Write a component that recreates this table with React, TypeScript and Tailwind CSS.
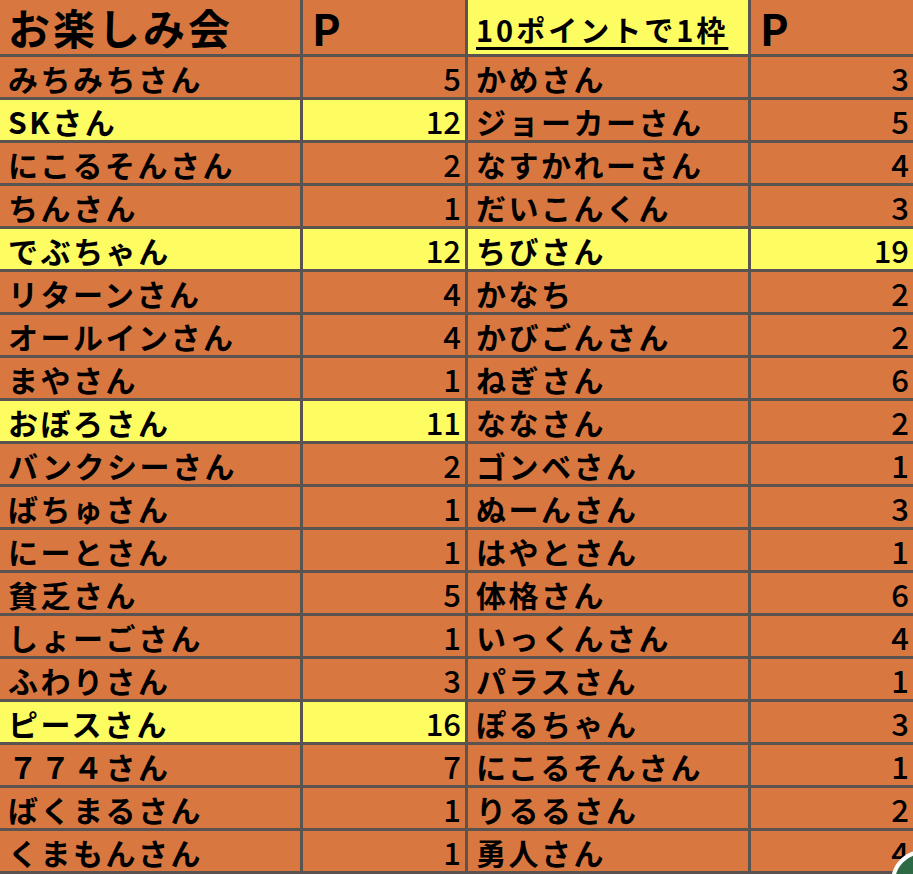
import React from 'react'

type Row = { name: string; p: number }

const left: Row[] = [
  { name: 'みちみちさん', p: 5 },
  { name: 'SKさん', p: 12 },
  { name: 'にこるそんさん', p: 2 },
  { name: 'ちんさん', p: 1 },
  { name: 'でぶちゃん', p: 12 },
  { name: 'リターンさん', p: 4 },
  { name: 'オールインさん', p: 4 },
  { name: 'まやさん', p: 1 },
  { name: 'おぼろさん', p: 11 },
  { name: 'バンクシーさん', p: 2 },
  { name: 'ばちゅさん', p: 1 },
  { name: 'にーとさん', p: 1 },
  { name: '貧乏さん', p: 5 },
  { name: 'しょーごさん', p: 1 },
  { name: 'ふわりさん', p: 3 },
  { name: 'ピースさん', p: 16 },
  { name: '７７４さん', p: 7 },
  { name: 'ばくまるさん', p: 1 },
  { name: 'くまもんさん', p: 1 },
]

const right: Row[] = [
  { name: 'かめさん', p: 3 },
  { name: 'ジョーカーさん', p: 5 },
  { name: 'なすかれーさん', p: 4 },
  { name: 'だいこんくん', p: 3 },
  { name: 'ちびさん', p: 19 },
  { name: 'かなち', p: 2 },
  { name: 'かびごんさん', p: 2 },
  { name: 'ねぎさん', p: 6 },
  { name: 'ななさん', p: 2 },
  { name: 'ゴンベさん', p: 1 },
  { name: 'ぬーんさん', p: 3 },
  { name: 'はやとさん', p: 1 },
  { name: '体格さん', p: 6 },
  { name: 'いっくんさん', p: 4 },
  { name: 'パラスさん', p: 1 },
  { name: 'ぽるちゃん', p: 3 },
  { name: 'にこるそんさん', p: 1 },
  { name: 'りるるさん', p: 2 },
  { name: '勇人さん', p: 4 },
]

const Cell: React.FC<{ row: Row }> = ({ row }) => {
  const bg = row.p >= 10 ? 'bg-[#fdfd62]' : 'bg-[#d97741]'
  return (
    <>
      <div className={`${bg} h-[40px] flex items-center pl-[8px] pt-[1px] text-[30px] tracking-[2.5px] whitespace-nowrap leading-[36px]`}>
        {row.name}
      </div>
      <div className={`${bg} h-[40px] flex items-center justify-end pr-[4px] pt-[1px] text-[31px] font-medium leading-[36px]`}>
        {row.p}
      </div>
    </>
  )
}

export default function App() {
  return (
    <div className="relative w-[913px] h-[874px] overflow-hidden bg-[#5a5350] font-['Noto_Sans_CJK_JP','Noto_Sans',sans-serif] font-bold text-black">
      <div className="grid grid-cols-[300px_162px_280px_162px] gap-[3px]">
        {/* header */}
        <div className="bg-[#d97741] h-[54px] flex items-center pl-[8px] text-[42px] tracking-[3px] leading-[54px]">
          お楽しみ会
        </div>
        <div className="bg-[#d97741] h-[54px] flex items-center pl-[9px] text-[43px] leading-[54px]">P</div>
        <div className="bg-[#fdfd62] h-[54px] flex items-end pl-[8px] pb-[6px] text-[29px] tracking-[3px] leading-[38px]">
          <span className="underline decoration-[3px] underline-offset-[5px]">10ポイントで1枠</span>
        </div>
        <div className="bg-[#d97741] h-[54px] flex items-center pl-[9px] text-[43px] leading-[54px]">P</div>

        {left.map((l, i) => (
          <React.Fragment key={i}>
            <Cell row={l} />
            <Cell row={right[i]} />
          </React.Fragment>
        ))}
      </div>

      {/* floating button in corner */}
      <div className="absolute left-[891px] top-[850px] w-[64px] h-[64px] rounded-full bg-[#2f6a46] border-[4px] border-white" />
    </div>
  )
}
